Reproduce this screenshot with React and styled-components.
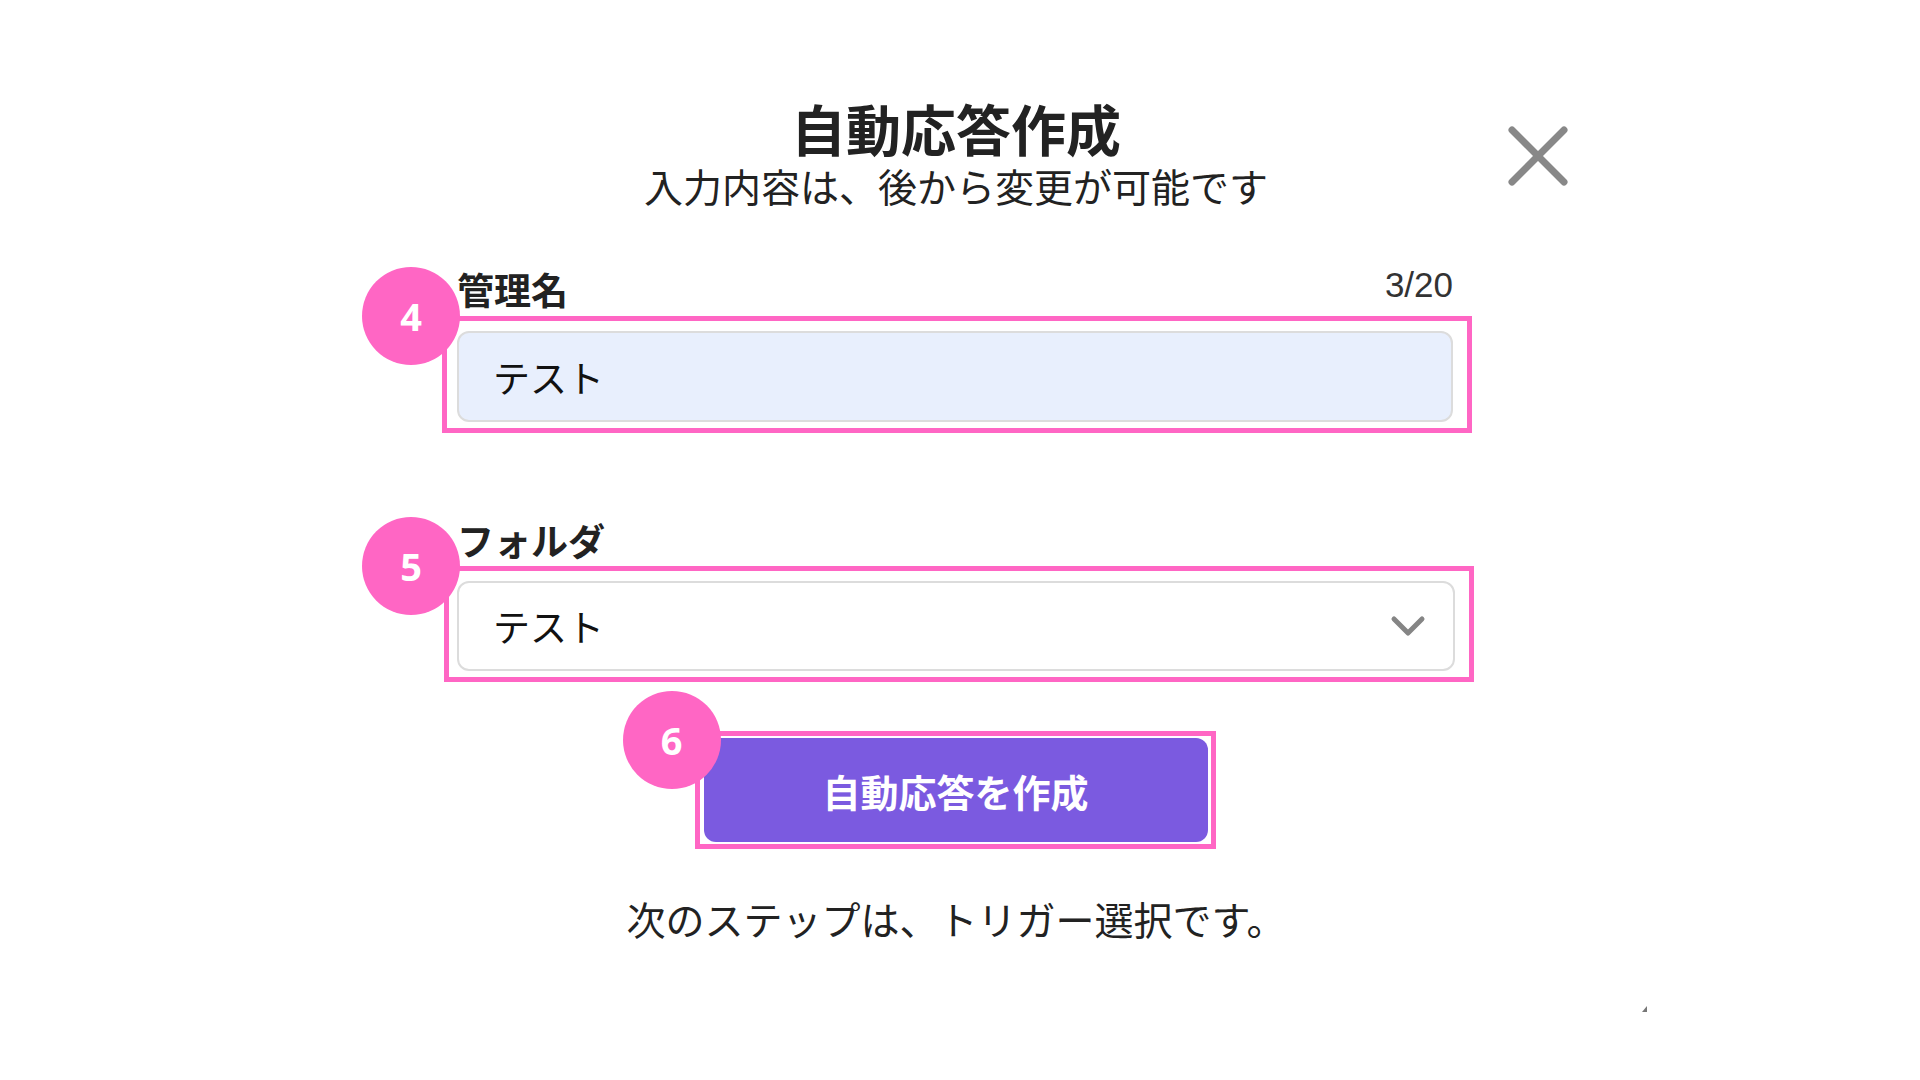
import React from "react";
import styled, { createGlobalStyle } from "styled-components";

const GlobalStyle = createGlobalStyle`
  html, body {
    margin: 0;
    padding: 0;
    background: #fff;
  }
  body {
    font-family: "Noto Sans CJK JP", "Noto Sans", sans-serif;
    color: #222;
  }
`;

const PINK = "#ff66c4";

const Page = styled.div`
  position: relative;
  width: 1920px;
  height: 1080px;
  display: flex;
  flex-direction: column;
  align-items: center;
  overflow: hidden;
`;

const Header = styled.header`
  box-sizing: border-box;
  width: 100%;
  margin-top: 98px;
  padding-right: 8px;
  display: grid;
  grid-template-columns: 1fr auto 1fr;
  align-items: center;
`;

const TitleBlock = styled.div`
  grid-column: 2;
  display: flex;
  flex-direction: column;
  align-items: center;
`;

const Title = styled.h1`
  margin: 0;
  font-size: 55px;
  line-height: 58px;
  font-weight: 700;
  color: #222;
`;

const Subtitle = styled.p`
  margin: 6px 0 0;
  font-size: 39px;
  line-height: 46px;
  color: #222;
`;

const CloseButton = styled.button`
  grid-column: 3;
  justify-self: end;
  margin-right: 344px;
  margin-top: 6px;
  width: 60px;
  height: 60px;
  padding: 0;
  border: none;
  background: none;
  cursor: pointer;
  display: flex;
  align-items: center;
  justify-content: center;
`;

const Form = styled.div`
  width: 996px;
  margin: 57px 10px 0 0;
  display: flex;
  flex-direction: column;
`;

const Field = styled.div`
  margin-top: ${(p) => p.$gap || 0}px;
`;

const FieldHead = styled.div`
  display: flex;
  justify-content: space-between;
  align-items: center;
`;

const Label = styled.label`
  font-size: 37px;
  line-height: 43px;
  font-weight: 700;
  color: #222;
`;

const Counter = styled.span`
  font-family: "Liberation Sans", Arial, sans-serif;
  font-size: 35px;
  color: #333;
  margin-bottom: 8px;
`;

const Highlight = styled.div`
  position: relative;
  border: 5px solid ${PINK};
  padding: ${(p) => p.$pad || "10px 14px 6px 10px"};
  margin: ${(p) => p.$margin || "3px -19px 0 -15px"};
`;

const Badge = styled.span`
  position: absolute;
  left: ${(p) => p.$left}px;
  top: ${(p) => p.$top}px;
  width: 98px;
  height: 98px;
  border-radius: 50%;
  background: ${PINK};
  color: #fff;
  font-family: "Noto Sans", "Open Sans", sans-serif;
  font-weight: 700;
  font-size: 38px;
  display: flex;
  align-items: center;
  justify-content: center;
  z-index: 2;
`;

const TextInput = styled.input`
  box-sizing: border-box;
  display: block;
  width: 100%;
  height: 91px;
  padding: 0 0 0 34px;
  border: 2px solid #dcdcdc;
  border-radius: 12px;
  background: #e8effd;
  font-family: inherit;
  font-size: 37px;
  color: #111;
  outline: none;
`;

const SelectBox = styled.div`
  box-sizing: border-box;
  width: 100%;
  height: 90px;
  padding: 0 27px 0 34px;
  border: 2px solid #dcdcdc;
  border-radius: 12px;
  background: #fff;
  display: flex;
  align-items: center;
  justify-content: space-between;
  font-size: 37px;
  color: #111;
`;

const ButtonRow = styled.div`
  display: flex;
  justify-content: center;
  margin-top: 49px;
`;

const PrimaryButton = styled.button`
  width: 504px;
  height: 104px;
  border: none;
  border-radius: 12px;
  background: #7b5ae0;
  color: #fff;
  font-family: inherit;
  font-size: 38px;
  font-weight: 700;
  cursor: pointer;
`;

const Note = styled.p`
  margin: 46px 8px 0 0;
  font-size: 39px;
  line-height: 46px;
  color: #222;
  text-align: center;
`;

const Grip = styled.span`
  position: absolute;
  left: 1642px;
  top: 1006px;
  width: 0;
  height: 0;
  border-left: 5px solid transparent;
  border-bottom: 6px solid #777;
`;

const CloseIcon = () => (
  <svg width="60" height="60" viewBox="0 0 60 60">
    <path d="M4 4 L56 56 M56 4 L4 56" stroke="#888" strokeWidth="7" strokeLinecap="round" />
  </svg>
);

const Chevron = () => (
  <svg width="36" height="24" viewBox="0 0 36 24">
    <path d="M4 5 L18 19 L32 5" fill="none" stroke="#858585" strokeWidth="5" strokeLinecap="round" strokeLinejoin="round" />
  </svg>
);

const App = () => {
  return (
    <Page>
      <GlobalStyle />
      <Header>
        <TitleBlock>
          <Title>自動応答作成</Title>
          <Subtitle>入力内容は、後から変更が可能です</Subtitle>
        </TitleBlock>
        <CloseButton aria-label="閉じる">
          <CloseIcon />
        </CloseButton>
      </Header>

      <Form>
        <Field>
          <FieldHead>
            <Label>管理名</Label>
            <Counter>3/20</Counter>
          </FieldHead>
          <Highlight>
            <Badge $left={-85} $top={-54}>4</Badge>
            <TextInput defaultValue="テスト" />
          </Highlight>
        </Field>

        <Field $gap={86}>
          <FieldHead>
            <Label>フォルダ</Label>
          </FieldHead>
          <Highlight $margin="4px -21px 0 -13px" $pad="10px 14px 6px 8px">
            <Badge $left={-87} $top={-54}>5</Badge>
            <SelectBox>
              <span>テスト</span>
              <Chevron />
            </SelectBox>
          </Highlight>
        </Field>

        <ButtonRow>
          <Highlight $margin="0" $pad="2px 3px 2px 4px">
            <Badge $left={-77} $top={-45}>6</Badge>
            <PrimaryButton>自動応答を作成</PrimaryButton>
          </Highlight>
        </ButtonRow>
      </Form>

      <Note>次のステップは、トリガー選択です。</Note>
      <Grip />
    </Page>
  );
};

export default App;
